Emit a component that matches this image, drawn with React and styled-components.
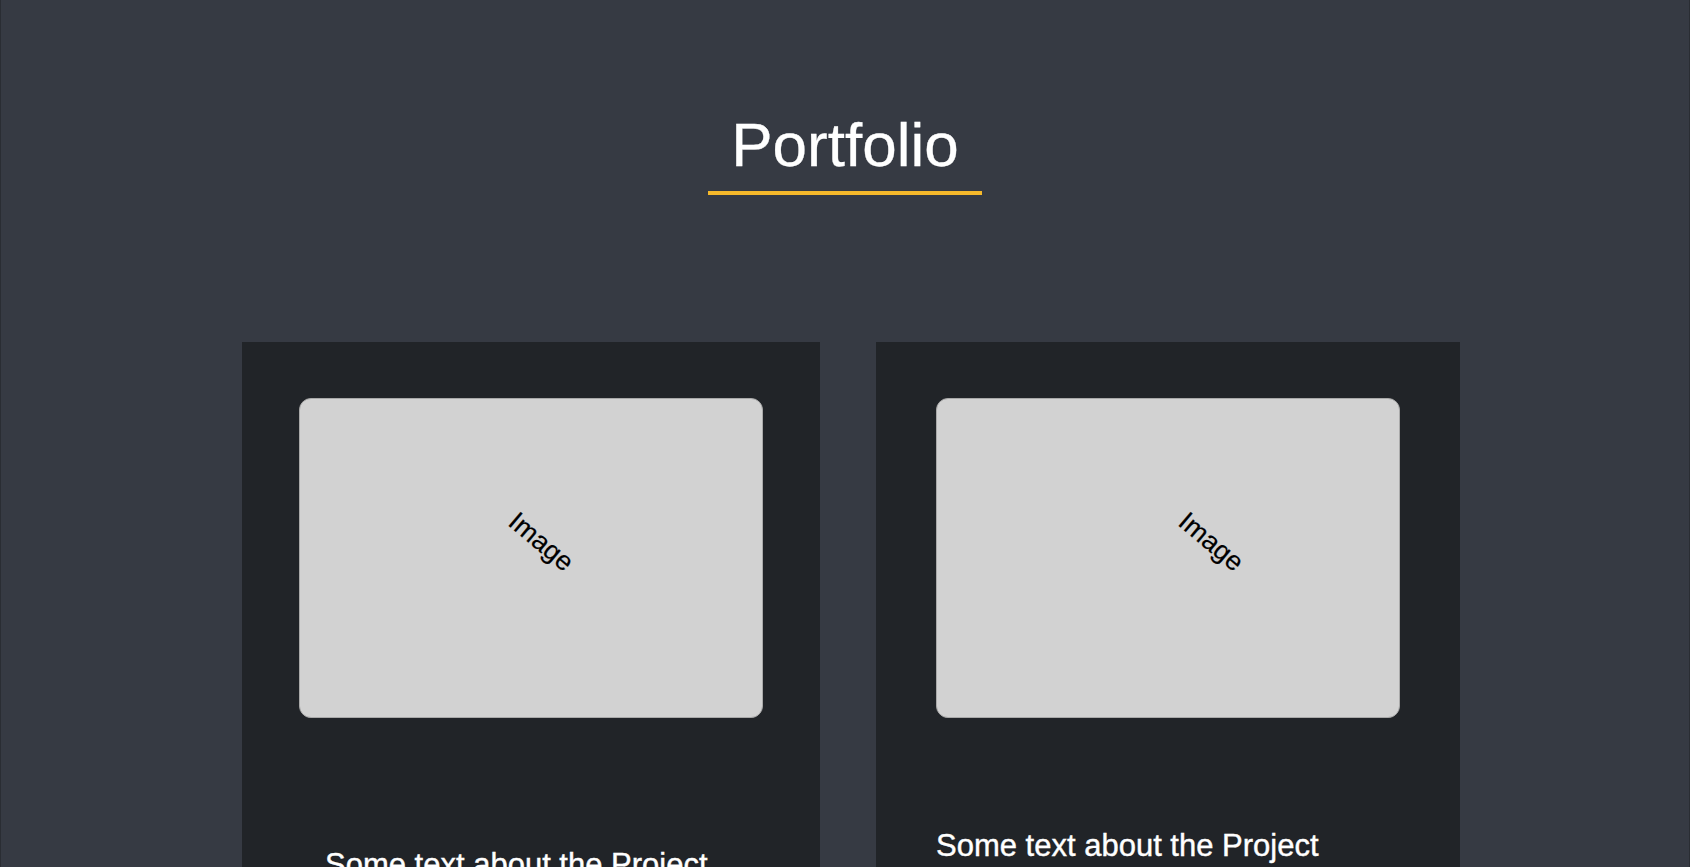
import React from 'react'
import styled, { createGlobalStyle } from 'styled-components'

const GlobalStyle = createGlobalStyle`
  html, body {
    margin: 0;
    padding: 0;
    background: #363a43;
  }
  body {
    font-family: "Liberation Sans", Arial, sans-serif;
  }
`

const Page = styled.main`
  min-height: 1100px;
  background: #363a43;
  border-left: 1px solid #2a2d33;
  border-right: 1px solid #2a2d33;
  padding-top: 109px;
`

const Header = styled.header`
  display: flex;
  justify-content: center;
`

const Title = styled.h1`
  display: inline-block;
  margin: 0;
  padding: 0 23px 11px;
  font-size: 62px;
  font-weight: 400;
  line-height: normal;
  color: #ffffff;
  border-bottom: 4px solid #f6b92b;
  -webkit-text-stroke: 0.3px #ffffff;
`

const Projects = styled.section`
  display: flex;
  gap: 56px;
  margin-top: 147px;
  padding-left: 241px;
`

const Card = styled.article`
  display: flex;
  flex-direction: column;
  align-items: flex-start;
  padding: 56px ${(p) => p.$pad}px 120px;
  background: #212428;
`

const ImageBox = styled.div`
  position: relative;
  box-sizing: border-box;
  width: 464px;
  height: 320px;
  background: #d2d2d2;
  border: 1px solid #a9a9a9;
  border-radius: 12px;
  overflow: hidden;
`

const ImageLabel = styled.span`
  position: absolute;
  left: ${(p) => p.$x}px;
  top: ${(p) => p.$y}px;
  transform: translate(-50%, -50%) rotate(40deg);
  font-size: 27px;
  color: #000000;
  white-space: nowrap;
  -webkit-text-stroke: 0.2px #000000;
`

const Caption = styled.p`
  margin: ${(p) => p.$top}px 0 0 ${(p) => p.$indent}px;
  font-size: 31px;
  line-height: normal;
  color: #ffffff;
  -webkit-text-stroke: 0.4px #ffffff;
`

const projects = [
  { pad: 57, label: { x: 241, y: 143 }, top: 129, indent: 26 },
  { pad: 60, label: { x: 274, y: 143 }, top: 110, indent: 0 },
]

const App = () => (
  <>
    <GlobalStyle />
    <Page>
      <Header>
        <Title>Portfolio</Title>
      </Header>
      <Projects>
        {projects.map((p, i) => (
          <Card key={i} $pad={p.pad}>
            <ImageBox>
              <ImageLabel $x={p.label.x} $y={p.label.y}>Image</ImageLabel>
            </ImageBox>
            <Caption $top={p.top} $indent={p.indent}>Some text about the Project</Caption>
          </Card>
        ))}
      </Projects>
    </Page>
  </>
)

export default App
